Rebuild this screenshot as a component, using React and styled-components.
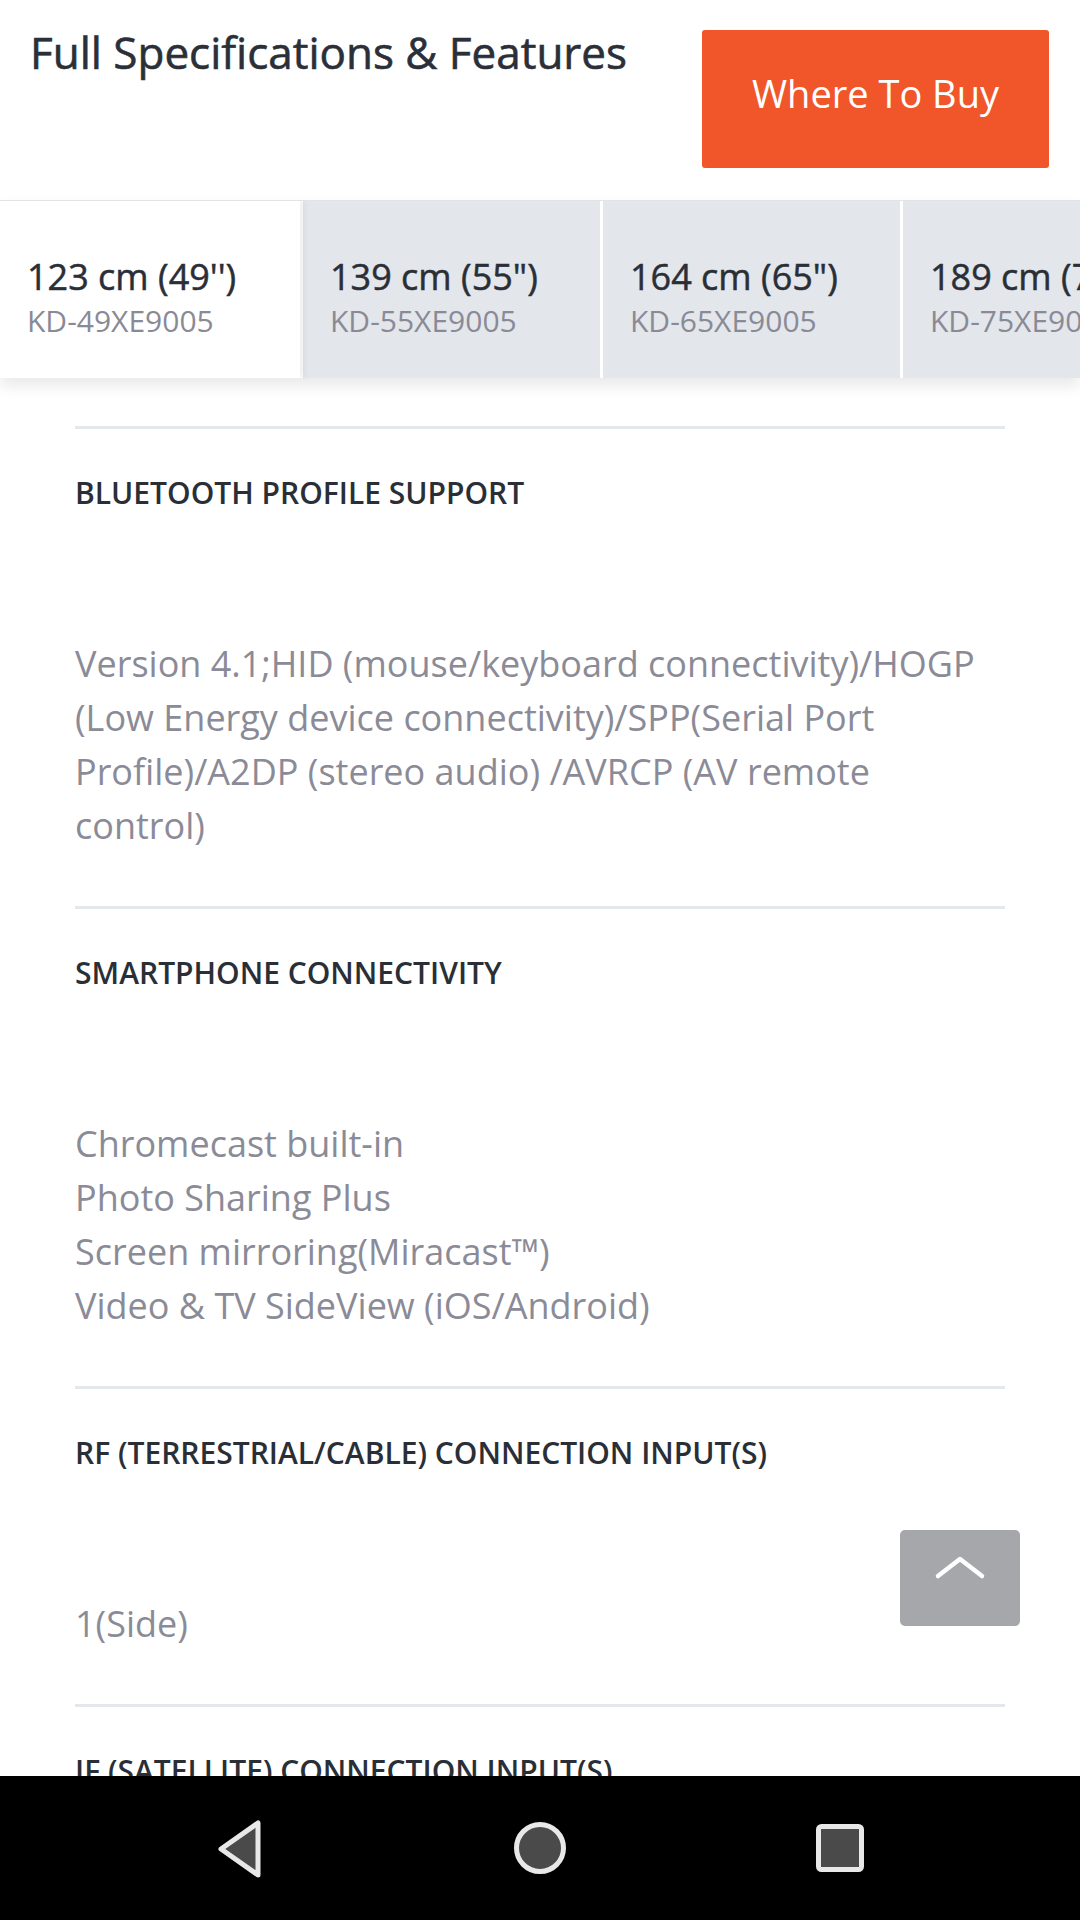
import React from "react";
import styled, { createGlobalStyle } from "styled-components";

const Global = createGlobalStyle`
  html, body { margin: 0; padding: 0; background: #fff; }
  body { font-family: "Open Sans", "Noto Sans", sans-serif; overflow: hidden; }
  * { box-sizing: border-box; }
`;

const Screen = styled.div`
  width: 1080px;
  height: 1920px;
  display: flex;
  flex-direction: column;
  background: #fff;
`;

const Viewport = styled.div`
  position: relative;
  flex: 1;
  overflow: hidden;
`;

const Header = styled.header`
  display: flex;
  justify-content: space-between;
  align-items: flex-start;
  padding: 30px 31px 32px 30px;
`;

const Title = styled.h1`
  margin: -4px 0 0;
  font-size: 44px;
  line-height: 52px;
  font-weight: 400;
  color: #2a2f38;
  -webkit-text-stroke: 0.6px #2a2f38;
`;

const BuyButton = styled.button`
  width: 347px;
  height: 138px;
  border: 0;
  border-radius: 3px;
  background: #f1562a;
  color: #fff;
  font-family: inherit;
  font-size: 38px;
  font-weight: 400;
  padding: 0 0 12px;
  cursor: pointer;
`;

const TabStrip = styled.div`
  display: flex;
  overflow: hidden;
  border-top: 1px solid #e3e3e3;
  box-shadow: 0 8px 14px rgba(0, 0, 0, 0.09);
  position: relative;
  z-index: 1;
`;

const Tab = styled.div`
  flex: 0 0 300px;
  height: 177px;
  padding: 54px 0 0 27px;
  background: ${(p) => (p.$active ? "#fff" : "#e3e6eb")};
  border-left: ${(p) => (p.$first ? "0" : "3px solid #fff")};
  box-shadow: ${(p) => (p.$active ? "3px 0 6px rgba(0,0,0,0.08)" : "none")};
  position: relative;
  z-index: ${(p) => (p.$active ? 1 : 0)};
  white-space: nowrap;
`;

const TabSize = styled.div`
  font-size: 36px;
  line-height: 44px;
  font-weight: 400;
  color: #2a2f37;
  -webkit-text-stroke: 0.5px #2a2f37;
`;

const TabModel = styled.div`
  margin-top: 3px;
  font-size: 30px;
  line-height: 38px;
  color: #8a8a96;
`;

const SpecList = styled.div`
  padding: 48px 75px 0;
`;

const Spec = styled.section`
  border-top: 3px solid #e4e7eb;
  padding: 46px 0 53px;
`;

const SpecName = styled.h3`
  margin: 0 0 126px;
  font-size: 30px;
  line-height: 36px;
  font-weight: 600;
  color: #2a2f37;
`;

const SpecValue = styled.div`
  max-width: 910px;
  font-size: 36px;
  line-height: 54px;
  color: #8b8b97;
`;

const Line = styled.div``;

const ScrollTop = styled.button`
  position: absolute;
  left: 900px;
  top: 1530px;
  width: 120px;
  height: 96px;
  border: 0;
  border-radius: 5px;
  background: #a6a7ab;
  padding: 0;
  display: block;
  cursor: pointer;
`;

const NavBar = styled.nav`
  flex: 0 0 144px;
  background: #000;
  display: grid;
  grid-template-columns: repeat(3, 1fr);
  align-items: center;
  justify-items: center;
  padding: 0 90px;
`;

const specs = [
  {
    name: "BLUETOOTH PROFILE SUPPORT",
    lines: [
      "Version 4.1;HID (mouse/keyboard connectivity)/HOGP (Low Energy device connectivity)/SPP(Serial Port Profile)/A2DP (stereo audio) /AVRCP (AV remote control)",
    ],
  },
  {
    name: "SMARTPHONE CONNECTIVITY",
    lines: [
      "Chromecast built-in",
      "Photo Sharing Plus",
      "Screen mirroring(Miracast™)",
      "Video & TV SideView (iOS/Android)",
    ],
  },
  { name: "RF (TERRESTRIAL/CABLE) CONNECTION INPUT(S)", lines: ["1(Side)"] },
  { name: "IF (SATELLITE) CONNECTION INPUT(S)", lines: ["2"] },
];

const tabs = [
  { size: "123 cm (49'')", model: "KD-49XE9005" },
  { size: '139 cm (55")', model: "KD-55XE9005" },
  { size: '164 cm (65")', model: "KD-65XE9005" },
  { size: '189 cm (75")', model: "KD-75XE9005" },
];

export default function App() {
  return (
    <Screen>
      <Global />
      <Viewport>
        <Header>
          <Title>Full Specifications &amp; Features</Title>
          <BuyButton>Where To Buy</BuyButton>
        </Header>
        <TabStrip>
          {tabs.map((t, i) => (
            <Tab key={t.model} $active={i === 0} $first={i === 0}>
              <TabSize>{t.size}</TabSize>
              <TabModel>{t.model}</TabModel>
            </Tab>
          ))}
        </TabStrip>
        <SpecList>
          {specs.map((s) => (
            <Spec key={s.name}>
              <SpecName>{s.name}</SpecName>
              <SpecValue>
                {s.lines.map((l) => (
                  <Line key={l}>{l}</Line>
                ))}
              </SpecValue>
            </Spec>
          ))}
        </SpecList>
        <ScrollTop aria-label="Back to top">
          <svg width="120" height="96" viewBox="0 0 120 96">
            <path
              d="M38 46 L60 29 L82 46"
              fill="none"
              stroke="#fff"
              strokeWidth="4.5"
              strokeLinecap="round"
              strokeLinejoin="round"
            />
          </svg>
        </ScrollTop>
      </Viewport>
      <NavBar>
        <svg width="60" height="64" viewBox="0 0 60 64">
          <path
            d="M48 7 L48 59 L11 33 Z"
            fill="#4a4a4a"
            stroke="#e8e8e8"
            strokeWidth="5"
            strokeLinejoin="round"
          />
        </svg>
        <svg width="60" height="60" viewBox="0 0 60 60">
          <circle cx="30" cy="30" r="23.5" fill="#4a4a4a" stroke="#e8e8e8" strokeWidth="5" />
        </svg>
        <svg width="60" height="60" viewBox="0 0 60 60">
          <rect x="8.5" y="8.5" width="43" height="43" rx="3" fill="#4a4a4a" stroke="#e8e8e8" strokeWidth="5" />
        </svg>
      </NavBar>
    </Screen>
  );
}
